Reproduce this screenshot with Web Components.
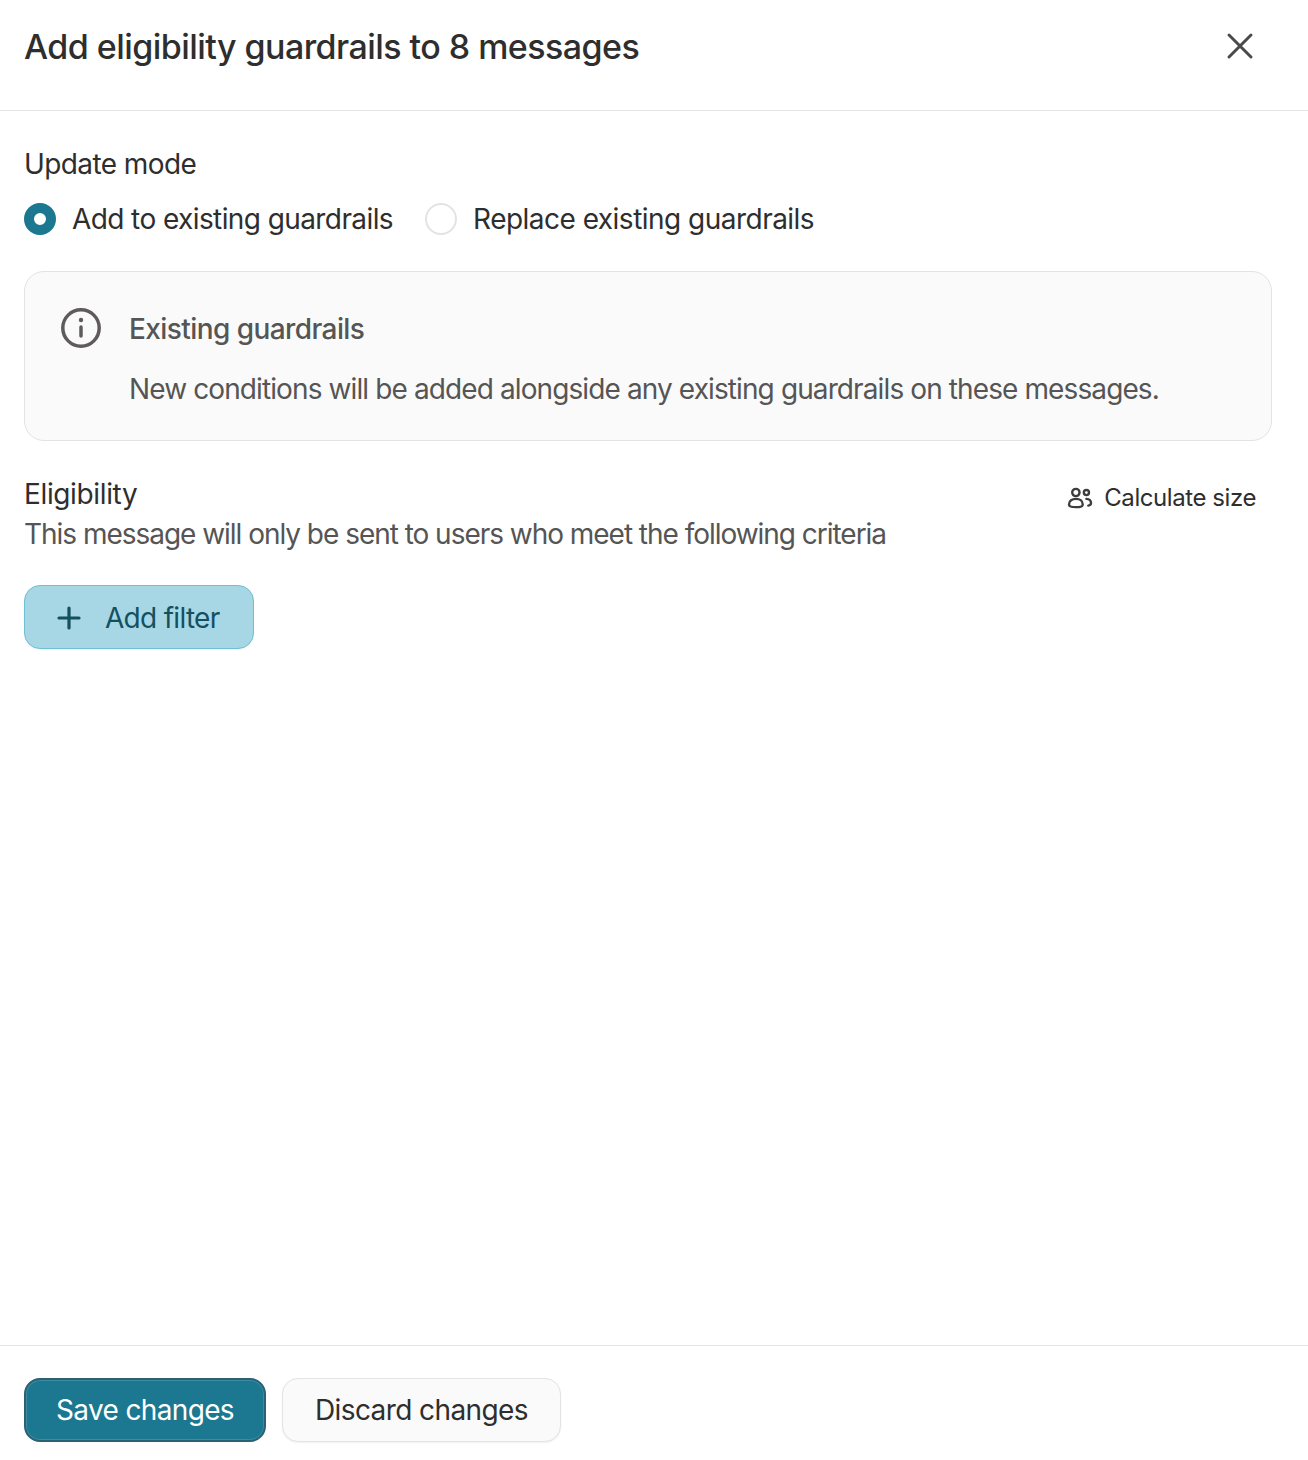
<!DOCTYPE html>
<html>
<head>
<meta charset="utf-8">
<style>
  html, body { margin: 0; padding: 0; background: #fff; }
  body { font-family: Inter, sans-serif; color: #2e2e2e; }
</style>
</head>
<body>
<guardrails-dialog>
  <span slot="title">Add eligibility guardrails to 8 messages</span>
  <mode-picker></mode-picker>
  <info-note heading="Existing guardrails">New conditions will be added alongside any existing guardrails on these messages.</info-note>
  <eligibility-section></eligibility-section>
</guardrails-dialog>

<script>
const dialogTemplate = document.createElement('template')
dialogTemplate.innerHTML = `
  <style>
    :host { display: flex; flex-direction: column; height: 1460px; box-sizing: border-box; }
    header {
      height: 111px; box-sizing: border-box; flex: none;
      display: flex; align-items: center; justify-content: space-between;
      padding: 0 54px 18px 24px; border-bottom: 1px solid #e3e3e3;
      font-size: 34px; font-weight: 500; letter-spacing: -0.55px; color: #2e2e2e;
    }
    header svg { display: block; }
    main { flex: 1; padding: 35px 36px 0 24px; }
    footer {
      height: 115px; box-sizing: border-box; flex: none;
      display: flex; gap: 16px; padding: 32px 24px 0;
      border-top: 1px solid #e3e3e3;
    }
  </style>
  <header>
    <slot name="title"></slot>
    <svg width="28" height="28" viewBox="0 0 28 28" fill="none" stroke="#4a4a4a" stroke-width="3" stroke-linecap="round"><path d="M3 3 25 25M25 3 3 25"/></svg>
  </header>
  <main><slot></slot></main>
  <footer>
    <action-button kind="primary">Save changes</action-button>
    <action-button>Discard changes</action-button>
  </footer>
`
class GuardrailsDialog extends HTMLElement {
  constructor() {
    super()
    this.attachShadow({ mode: 'open' }).appendChild(dialogTemplate.content.cloneNode(true))
  }
}

const buttonTemplate = document.createElement('template')
buttonTemplate.innerHTML = `
  <style>
    :host { display: inline-flex; }
    button {
      height: 64px; box-sizing: border-box; padding: 0 32px;
      font: 400 28px Inter, sans-serif; letter-spacing: -0.6px; cursor: pointer;
      border-radius: 16px; border: 1px solid #e3e3e3; background: #fafafa; color: #2e2e2e;
      box-shadow: 0 1px 2px rgba(0,0,0,.06);
    }
    :host([kind="primary"]) button {
      padding: 0 30px; letter-spacing: -0.65px;
      background: #1b7890; color: #fff; border: 2px solid #2a6274;
      box-shadow: inset 0 0 0 1px #3f8aa0;
    }
  </style>
  <button><slot></slot></button>
`
class ActionButton extends HTMLElement {
  constructor() {
    super()
    this.attachShadow({ mode: 'open' }).appendChild(buttonTemplate.content.cloneNode(true))
  }
}

const modeTemplate = document.createElement('template')
modeTemplate.innerHTML = `
  <style>
    :host { display: block; font-size: 28px; line-height: 36px; color: #2e2e2e; letter-spacing: -0.59px; }
    .row { display: flex; gap: 32px; margin-top: 19px; }
    label { display: flex; align-items: center; gap: 16px; }
    label + label { letter-spacing: -0.52px; }
    .dot { width: 32px; height: 32px; box-sizing: border-box; border-radius: 50%; border: 2px solid #e3e3e3; background: #fff; flex: none; }
    .on { border: 10px solid #1b7890; }
  </style>
  <div>Update mode</div>
  <div class="row">
    <label><span class="dot on"></span>Add to existing guardrails</label>
    <label><span class="dot"></span>Replace existing guardrails</label>
  </div>
`
class ModePicker extends HTMLElement {
  constructor() {
    super()
    this.attachShadow({ mode: 'open' }).appendChild(modeTemplate.content.cloneNode(true))
  }
}

const noteTemplate = document.createElement('template')
noteTemplate.innerHTML = `
  <style>
    :host {
      display: flex; gap: 28px; margin-top: 34px; height: 170px; box-sizing: border-box;
      padding: 36px 36px 0; background: #fafafa; border: 1px solid #e3e3e3; border-radius: 20px;
      color: #555; font-size: 28px; line-height: 40px; letter-spacing: -0.89px;
    }
    svg { flex: none; display: block; }
    .copy { padding-top: 1px; }
    h3 { margin: 0 0 20px; font: inherit; font-weight: 500; letter-spacing: -0.58px; }
  </style>
  <svg width="40" height="40" viewBox="0 0 40 40" fill="none" stroke="#5f5b5b" stroke-width="3.5"><circle cx="20" cy="20" r="18.2"/><path d="M20 19v9" stroke-linecap="round"/><circle cx="20" cy="12" r="2.2" fill="#5f5b5b" stroke="none"/></svg>
  <div class="copy"><h3></h3><slot></slot></div>
`
class InfoNote extends HTMLElement {
  constructor() {
    super()
    this.attachShadow({ mode: 'open' }).appendChild(noteTemplate.content.cloneNode(true))
    this.shadowRoot.querySelector('h3').textContent = this.getAttribute('heading')
  }
}

const eligibilityTemplate = document.createElement('template')
eligibilityTemplate.innerHTML = `
  <style>
    :host { display: block; margin-top: 33px; font-size: 28px; line-height: 40px; }
    .top { display: flex; justify-content: space-between; align-items: flex-start; }
    .title { color: #2e2e2e; letter-spacing: -0.36px; }
    .sub { color: #555; letter-spacing: -1.03px; }
    .calc { display: flex; align-items: center; gap: 11px; font-size: 24px; letter-spacing: -0.43px; color: #2e2e2e; padding: 4px 16px 0 0; }
    .add {
      display: inline-flex; align-items: center; gap: 24px; margin-top: 31px;
      height: 64px; box-sizing: border-box; padding: 1px 33px 0 32px;
      background: #a7d7e5; border: 1px solid #70bfd3; border-radius: 16px; color: #14505f;
      font: 400 28px Inter, sans-serif; letter-spacing: -0.7px; box-shadow: 0 1px 2px rgba(0,0,0,.05);
    }
    svg { display: block; flex: none; }
  </style>
  <div class="top">
    <div>
      <div class="title">Eligibility</div>
      <div class="sub">This message will only be sent to users who meet the following criteria</div>
    </div>
    <div class="calc">
      <svg width="26" height="22" viewBox="0 0 27 24" fill="none" stroke="#3d3d3d" stroke-width="2.6" stroke-linecap="round"><circle cx="9" cy="6" r="4"/><circle cx="20.500" cy="6" r="2.800"/><path d="M1.500 19c0-4 3.500-6 7.500-6s7.500 2 7.500 6c0 2-2 3-7.500 3s-7.500-1-7.500-3z"/><path d="M20.500 13c3 .2 5 2 5 4.500 0 1.500-1 2.500-3 2.800"/></svg>
      Calculate size
    </div>
  </div>
  <button class="add">
    <svg width="24" height="24" viewBox="0 0 24 24" fill="none" stroke="#14505f" stroke-width="3.200" stroke-linecap="round"><path d="M12 2v20M2 12h20"/></svg>
    Add filter
  </button>
`
class EligibilitySection extends HTMLElement {
  constructor() {
    super()
    this.attachShadow({ mode: 'open' }).appendChild(eligibilityTemplate.content.cloneNode(true))
  }
}

customElements.define('guardrails-dialog', GuardrailsDialog)
customElements.define('action-button', ActionButton)
customElements.define('mode-picker', ModePicker)
customElements.define('info-note', InfoNote)
customElements.define('eligibility-section', EligibilitySection)
</script>
</body>
</html>
